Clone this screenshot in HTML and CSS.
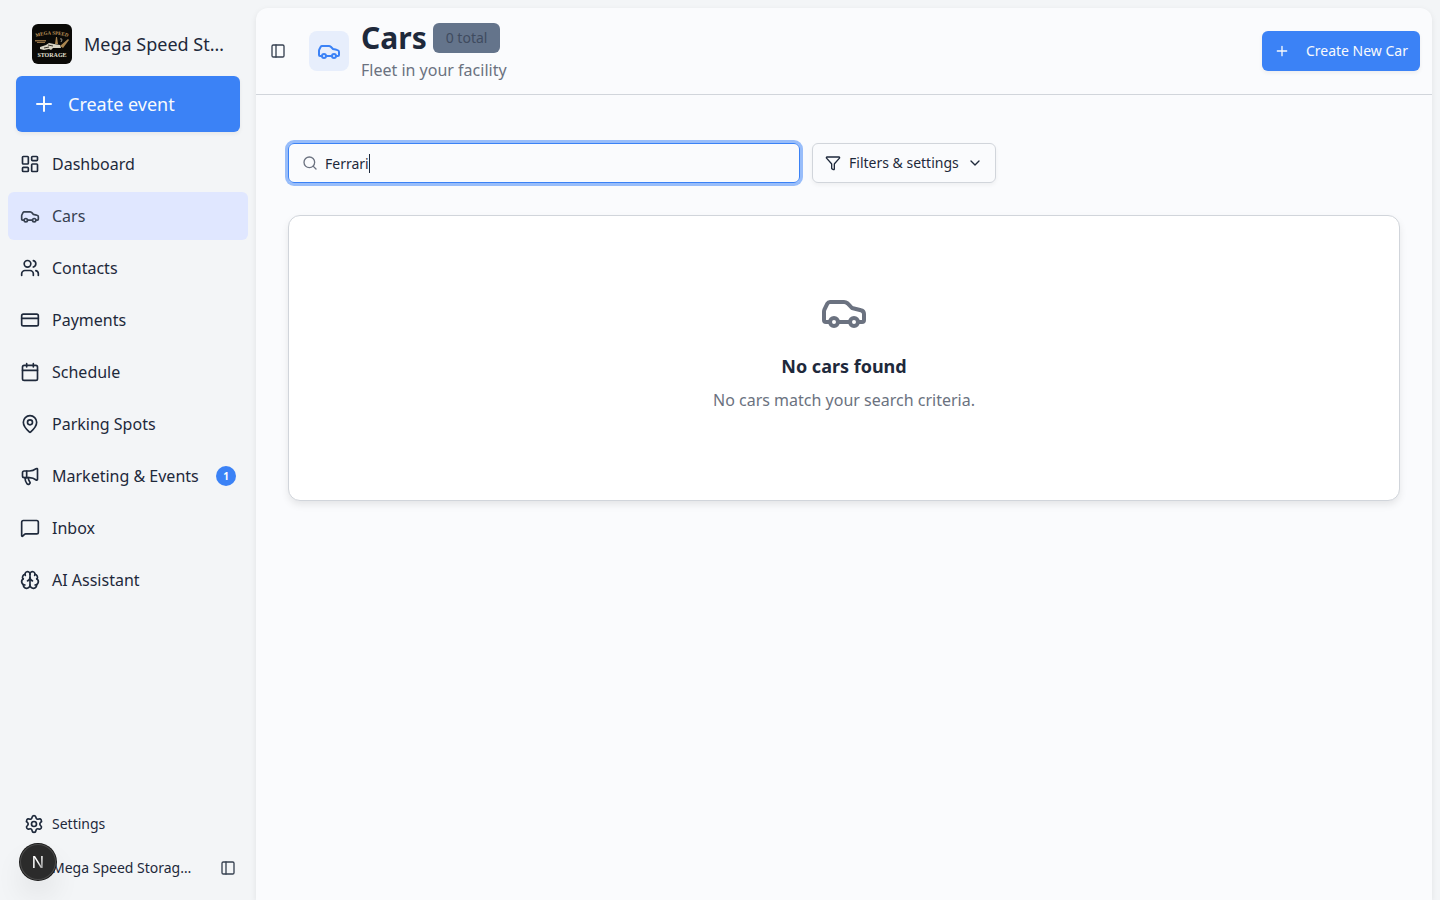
FILE: index.html
```html
<!DOCTYPE html>
<html lang="en">
<head>
    <meta charset="utf-8">
    <meta name="viewport" content="width=device-width, initial-scale=1">
    <title>Cars</title>
    <link rel="stylesheet" href="styles.css">
</head>
<body>
    <!-- Shared icons -->
    <svg class="sprite" aria-hidden="true">
        <symbol id="icon-car" viewBox="0 0 24 24">
            <path d="M19 17h2c.6 0 1-.4 1-1v-3c0-.9-.7-1.7-1.5-1.9C18.7 10.6 16 10 16 10s-1.3-1.4-2.2-2.3c-.5-.4-1.1-.7-1.8-.7H5c-.6 0-1.1.4-1.4.9l-1.4 2.9A3.7 3.7 0 0 0 2 12v4c0 .6.4 1 1 1h2"/>
            <circle cx="7" cy="17" r="2"/>
            <path d="M9 17h6"/>
            <circle cx="17" cy="17" r="2"/>
        </symbol>
        <symbol id="icon-plus" viewBox="0 0 24 24">
            <path d="M5 12h14M12 5v14"/>
        </symbol>
        <symbol id="icon-panel" viewBox="0 0 24 24">
            <rect x="3" y="3" width="18" height="18" rx="2"/>
            <path d="M9 3v18"/>
        </symbol>
    </svg>

    <div class="layout">
        <aside class="sidebar">
            <a class="brand" href="#">
                <svg class="brand-logo" viewBox="0 0 40 40" aria-hidden="true">
                    <rect width="40" height="40" rx="6" fill="#0a0907"/>
                    <path id="logo-arc" d="M1 14Q20 7 39 14" fill="none"/>
                    <text class="logo-top"><textPath href="#logo-arc" startOffset="50%" text-anchor="middle">MEGA SPEED</textPath></text>
                    <path d="M3 16h11v1.500H3zM5 18h8v1H5z" fill="#8d6d43"/>
                    <path d="M24 13l1 0 1 7h-3zM28 22l8-7 1 1-6 8z" fill="#a98550"/>
                    <path d="M28 15q2-1 2 1l-1 2" fill="none" stroke="#b9b4a5" stroke-width="0.800"/>
                    <path d="M8 23l6-2 3-2 5 1 6 1 1 3-8 0-2 2-2-1-5 1-4-1z" fill="#d8d3c4"/>
                    <path d="M16 21l5 1M12 24l5-1" stroke="#3a362e" stroke-width="1"/>
                    <text class="logo-bottom" x="20" y="33" text-anchor="middle">STORAGE</text>
                </svg>
                <span class="brand-name">Mega Speed Storage</span>
            </a>

            <button class="btn-event" type="button">
                <svg class="icon icon-lg"><use href="#icon-plus"/></svg>
                Create event
            </button>

            <nav class="nav">
                <a class="nav-item" href="#">
                    <svg class="icon icon-md" viewBox="0 0 24 24"><rect x="3" y="3" width="7" height="9" rx="1"/><rect x="14" y="3" width="7" height="5" rx="1"/><rect x="14" y="12" width="7" height="9" rx="1"/><rect x="3" y="16" width="7" height="5" rx="1"/></svg>
                    Dashboard
                </a>
                <a class="nav-item active" href="#" aria-current="page">
                    <svg class="icon icon-md"><use href="#icon-car"/></svg>
                    Cars
                </a>
                <a class="nav-item" href="#">
                    <svg class="icon icon-md" viewBox="0 0 24 24"><path d="M16 21v-2a4 4 0 0 0-4-4H6a4 4 0 0 0-4 4v2"/><path d="M16 3.128a4 4 0 0 1 0 7.744"/><path d="M22 21v-2a4 4 0 0 0-3-3.870"/><circle cx="9" cy="7" r="4"/></svg>
                    Contacts
                </a>
                <a class="nav-item" href="#">
                    <svg class="icon icon-md" viewBox="0 0 24 24"><rect x="2" y="5" width="20" height="14" rx="2"/><path d="M2 10h20"/></svg>
                    Payments
                </a>
                <a class="nav-item" href="#">
                    <svg class="icon icon-md" viewBox="0 0 24 24"><path d="M8 2v4M16 2v4"/><rect x="3" y="4" width="18" height="18" rx="2"/><path d="M3 10h18"/></svg>
                    Schedule
                </a>
                <a class="nav-item" href="#">
                    <svg class="icon icon-md" viewBox="0 0 24 24"><path d="M20 10c0 4.993-5.539 10.193-7.399 11.799a1 1 0 0 1-1.202 0C9.539 20.193 4 14.993 4 10a8 8 0 0 1 16 0"/><circle cx="12" cy="10" r="3"/></svg>
                    Parking Spots
                </a>
                <a class="nav-item" href="#">
                    <svg class="icon icon-md" viewBox="0 0 24 24"><path d="M11 6a13 13 0 0 0 8.400-2.800A1 1 0 0 1 21 4v12a1 1 0 0 1-1.600.800A13 13 0 0 0 11 14H5a2 2 0 0 1-2-2V8a2 2 0 0 1 2-2z"/><path d="M6 14a12 12 0 0 0 2.400 7.200 2 2 0 0 0 3.200-2.400A8 8 0 0 1 10 14"/><path d="M8 6v8"/></svg>
                    Marketing &amp; Events
                    <span class="count">1</span>
                </a>
                <a class="nav-item" href="#">
                    <svg class="icon icon-md" viewBox="0 0 24 24"><path d="M22 17a2 2 0 0 1-2 2H6.828a2 2 0 0 0-1.414.586l-2.202 2.202A.71.71 0 0 1 2 21.286V5a2 2 0 0 1 2-2h16a2 2 0 0 1 2 2z"/></svg>
                    Inbox
                </a>
                <a class="nav-item" href="#">
                    <svg class="icon icon-md" viewBox="0 0 24 24"><path d="M12 18V5"/><path d="M15 13a4.170 4.170 0 0 1-3-4 4.170 4.170 0 0 1-3 4"/><path d="M17.598 6.500A3 3 0 1 0 12 5a3 3 0 1 0-5.598 1.500"/><path d="M17.997 5.125a4 4 0 0 1 2.526 5.770"/><path d="M18 18a4 4 0 0 0 2-7.464"/><path d="M19.967 17.483A4 4 0 1 1 12 18a4 4 0 1 1-7.967-.517"/><path d="M6 18a4 4 0 0 1-2-7.464"/><path d="M6.003 5.125a4 4 0 0 0-2.526 5.770"/></svg>
                    AI Assistant
                </a>
            </nav>

            <div class="sidebar-footer">
                <a class="footer-link" href="#">
                    <svg class="icon icon-md" viewBox="0 0 24 24"><path d="M9.671 4.136a2.340 2.340 0 0 1 4.659 0 2.340 2.340 0 0 0 3.319 1.915 2.340 2.340 0 0 1 2.330 4.033 2.340 2.340 0 0 0 0 3.831 2.340 2.340 0 0 1-2.330 4.033 2.340 2.340 0 0 0-3.319 1.915 2.340 2.340 0 0 1-4.659 0 2.340 2.340 0 0 0-3.320-1.915 2.340 2.340 0 0 1-2.330-4.033 2.340 2.340 0 0 0 0-3.831A2.340 2.340 0 0 1 6.350 6.051a2.340 2.340 0 0 0 3.319-1.915"/><circle cx="12" cy="12" r="3"/></svg>
                    Settings
                </a>
                <div class="account">
                    <span class="account-name">Mega Speed Storage LLC</span>
                    <button class="btn-icon" type="button" aria-label="Collapse sidebar">
                        <svg class="icon icon-sm"><use href="#icon-panel"/></svg>
                    </button>
                </div>
            </div>
        </aside>

        <main class="main">
            <header class="page-header">
                <button class="btn-icon" type="button" aria-label="Toggle sidebar">
                    <svg class="icon icon-sm"><use href="#icon-panel"/></svg>
                </button>
                <div class="page-icon">
                    <svg class="icon icon-lg"><use href="#icon-car"/></svg>
                </div>
                <div class="page-title">
                    <div class="title-row">
                        <h1>Cars</h1>
                        <span class="total">0 total</span>
                    </div>
                    <p>Fleet in your facility</p>
                </div>
                <button class="btn-new" type="button">
                    <svg class="icon icon-sm"><use href="#icon-plus"/></svg>
                    Create New Car
                </button>
            </header>

            <div class="content">
                <div class="toolbar">
                    <label class="search">
                        <svg class="icon icon-sm" viewBox="0 0 24 24"><path d="m21 21-4.340-4.340"/><circle cx="11" cy="11" r="8"/></svg>
                        <input type="text" value="Ferrari" aria-label="Search cars">
                        <span class="caret"></span>
                    </label>
                    <button class="btn-filter" type="button">
                        <svg class="icon icon-sm" viewBox="0 0 24 24"><path d="M10 20a1 1 0 0 0 .553.895l2 1A1 1 0 0 0 14 21v-7a2 2 0 0 1 .517-1.341L21.740 4.670A1 1 0 0 0 21 3H3a1 1 0 0 0-.742 1.670l7.225 7.989A2 2 0 0 1 10 14z"/></svg>
                        Filters &amp; settings
                        <svg class="icon icon-sm" viewBox="0 0 24 24"><path d="m6 9 6 6 6-6"/></svg>
                    </button>
                </div>

                <section class="empty">
                    <svg class="icon icon-xl"><use href="#icon-car"/></svg>
                    <h2>No cars found</h2>
                    <p>No cars match your search criteria.</p>
                </section>
            </div>
        </main>
    </div>

    <button class="dev-badge" type="button" aria-label="Open dev tools">
        <svg viewBox="0 0 36 36">
            <defs>
                <linearGradient id="n-fade" x1="0" y1="0" x2="1" y2="1">
                    <stop offset="0.500" stop-color="#fff"/>
                    <stop offset="1" stop-color="#fff" stop-opacity="0.300"/>
                </linearGradient>
            </defs>
            <text x="18" y="24" text-anchor="middle" fill="url(#n-fade)">N</text>
        </svg>
    </button>
</body>
</html>
```
FILE: styles.css
```css
* {
    box-sizing: border-box;
}

body {
    margin: 0;
    background-color: #f3f5f7;
    color: #1e293b;
    font-family: "Noto Sans", sans-serif;
    font-size: 16px;
    line-height: 24px;
}

h1, h2, p {
    margin: 0;
}

a {
    color: inherit;
    text-decoration: none;
}

button, input {
    font-family: inherit;
    color: inherit;
}

button {
    border: none;
    background: none;
    padding: 0;
    line-height: 20px;
    cursor: pointer;
}

.sprite {
    display: none;
}

/* Icons */
.icon {
    flex: none;
    fill: none;
    stroke: currentColor;
    stroke-width: 2;
    stroke-linecap: round;
    stroke-linejoin: round;
}

.icon-sm {
    width: 16px;
    height: 16px;
}

.icon-md {
    width: 20px;
    height: 20px;
}

.icon-lg {
    width: 24px;
    height: 24px;
}

.icon-xl {
    width: 48px;
    height: 48px;
}

.layout {
    display: flex;
    min-height: 100vh;
}

/* Sidebar */
.sidebar {
    display: flex;
    flex-direction: column;
    flex: none;
    width: 256px;
    padding: 24px 8px 12px;
}

.brand {
    display: flex;
    align-items: center;
    gap: 12px;
    padding: 0 24px;
    font-size: 18px;
}

.brand-logo {
    flex: none;
    width: 40px;
    height: 40px;
}

.brand-name,
.account-name {
    min-width: 0;
    overflow: hidden;
    text-overflow: ellipsis;
    white-space: nowrap;
}

.logo-top,
.logo-bottom {
    font-family: "Liberation Serif", serif;
    font-weight: bold;
    font-size: 5px;
    fill: #c0975c;
}

.logo-bottom {
    font-size: 6px;
    fill: #e4e0d4;
}

.btn-event {
    display: flex;
    align-items: center;
    gap: 12px;
    height: 56px;
    margin: 12px 8px 8px;
    padding: 0 16px;
    border-radius: 6px;
    background-color: #3b82f6;
    color: #f8fafc;
    font-size: 18px;
    line-height: 28px;
    box-shadow: 0 2px 4px rgba(0, 0, 0, 0.06);
}

.nav {
    display: flex;
    flex-direction: column;
    gap: 4px;
}

.nav-item {
    display: flex;
    align-items: center;
    gap: 12px;
    height: 48px;
    padding: 0 12px;
    border-radius: 6px;
}

.nav-item.active {
    background-color: #e0e7ff;
    color: #374151;
}

.count {
    width: 20px;
    margin-left: auto;
    border-radius: 50%;
    background-color: #3b82f6;
    color: #fff;
    font-size: 10px;
    font-weight: bold;
    line-height: 20px;
    text-align: center;
}

.sidebar-footer {
    margin-top: auto;
    font-size: 14px;
}

.footer-link {
    display: flex;
    align-items: center;
    gap: 8px;
    height: 48px;
    padding: 0 16px;
}

.account {
    display: flex;
    align-items: center;
    justify-content: space-between;
    gap: 20px;
    height: 40px;
    padding: 0 4px 0 44px;
}

.btn-icon {
    display: flex;
    flex: none;
    align-items: center;
    justify-content: center;
    width: 32px;
    height: 32px;
    color: #374151;
}

/* Main area */
.main {
    flex: 1;
    min-width: 0;
    margin: 8px 8px 0 0;
    border-radius: 12px 12px 0 0;
    background-color: #fafbfd;
    box-shadow: 0 2px 6px rgba(0, 0, 0, 0.08);
}

.page-header {
    display: flex;
    align-items: center;
    height: 87px;
    padding: 0 12px 0 6px;
    border-bottom: 1px solid #d1d5db;
}

.page-icon {
    display: flex;
    align-items: center;
    justify-content: center;
    width: 40px;
    height: 40px;
    margin: 0 12px 0 15px;
    border-radius: 8px;
    background-color: #e7eefc;
    color: #3b82f6;
}

.page-title {
    margin-right: auto;
}

.page-title p {
    color: #6b7280;
}

.title-row {
    display: flex;
    align-items: center;
    gap: 6px;
    margin-bottom: 2px;
}

.title-row h1 {
    font-size: 30px;
    line-height: 36px;
}

.total {
    padding: 0 13px;
    border-radius: 6px;
    background-color: #64748b;
    color: #3f4b5f;
    font-size: 14px;
    line-height: 30px;
}

.btn-new {
    display: flex;
    align-items: center;
    gap: 16px;
    height: 40px;
    padding: 0 12px;
    border-radius: 6px;
    background-color: #3b82f6;
    color: #f8fafc;
    font-size: 14px;
    box-shadow: 0 2px 4px rgba(0, 0, 0, 0.06);
}

.content {
    padding: 48px 32px;
}

.toolbar {
    display: flex;
    gap: 12px;
    margin-bottom: 32px;
}

.search {
    display: flex;
    align-items: center;
    flex: 0 1 512px;
    height: 40px;
    padding: 0 13px;
    border: 1px solid #3b82f6;
    border-radius: 6px;
    box-shadow: 0 0 0 3px #98bdfa;
    cursor: text;
}

.search .icon {
    margin-right: 7px;
    color: #6b7280;
}

.search input {
    field-sizing: content;
    padding: 0;
    border: none;
    outline: none;
    background: none;
    font-size: 14px;
    caret-color: transparent;
}

.caret {
    width: 1px;
    height: 19px;
    background-color: #1e293b;
}

.btn-filter {
    display: flex;
    align-items: center;
    gap: 8px;
    height: 40px;
    padding: 0 12px;
    border: 1px solid #d1d5db;
    border-radius: 6px;
    font-size: 14px;
    box-shadow: 0 2px 4px rgba(0, 0, 0, 0.05);
}

.empty {
    display: flex;
    flex-direction: column;
    align-items: center;
    padding: 72px 24px 88px;
    border: 1px solid #d1d5db;
    border-radius: 12px;
    background-color: #fff;
    color: #6b7280;
    box-shadow: 0 4px 8px -1px rgba(0, 0, 0, 0.1);
}

.empty h2 {
    margin: 16px 0 8px;
    color: #1e293b;
    font-size: 18px;
    line-height: 28px;
}

/* Floating dev tools button */
.dev-badge {
    position: fixed;
    left: 20px;
    bottom: 20px;
    width: 36px;
    height: 36px;
    border-radius: 50%;
    background-color: #2b2b2b;
    box-shadow: 0 0 0 1px #171717, inset 0 0 0 1px #4a4a4a, 0 16px 32px -8px rgba(0, 0, 0, 0.24);
}

.dev-badge svg {
    display: block;
}

.dev-badge text {
    font-family: "Liberation Sans", sans-serif;
    font-size: 17px;
}
```
